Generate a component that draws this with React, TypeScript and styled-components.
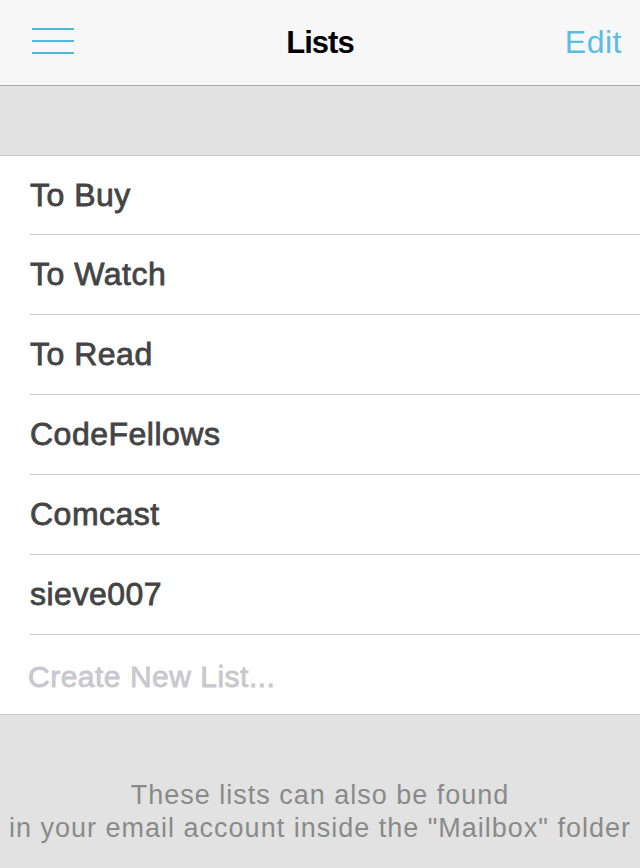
import React from "react";
import styled, { createGlobalStyle } from "styled-components";

const GlobalStyle = createGlobalStyle`
  html, body {
    margin: 0;
    padding: 0;
    background: #e2e2e2;
  }
  body {
    font-family: "Liberation Sans", Arial, sans-serif;
    -webkit-font-smoothing: antialiased;
  }
`;

const Screen = styled.div`
  width: 640px;
  height: 868px;
  display: flex;
  flex-direction: column;
  background: #e2e2e2;
  overflow: hidden;
`;

const NavBar = styled.header`
  height: 85px;
  flex-shrink: 0;
  display: grid;
  grid-template-columns: 1fr auto 1fr;
  align-items: center;
  padding: 0 18px;
  background: #f7f7f7;
  border-bottom: 1px solid #a8a8a8;
`;

const MenuButton = styled.button`
  justify-self: start;
  width: 42px;
  height: 26px;
  margin: -4px 0 0 14px;
  padding: 0;
  border: none;
  background: none;
  display: flex;
  flex-direction: column;
  justify-content: space-between;

  span {
    display: block;
    width: 42px;
    height: 2px;
    background: #4fb9e0;
  }
`;

const Title = styled.h1`
  margin: 0;
  font-size: 31px;
  font-weight: 700;
  color: #000;
  letter-spacing: -1px;
`;

const EditButton = styled.button`
  justify-self: end;
  border: none;
  background: none;
  padding: 0;
  font-family: inherit;
  font-size: 32px;
  font-weight: 400;
  letter-spacing: 0.5px;
  color: #5bbde2;
`;

const Band = styled.div`
  height: 69px;
  flex-shrink: 0;
  border-bottom: 1px solid #c8c8c8;
`;

const List = styled.ul`
  margin: 0;
  padding: 0 0 0 30px;
  list-style: none;
  background: #fff;
  border-bottom: 1px solid #c8c8c8;
`;

const Row = styled.li<{ $placeholder?: boolean }>`
  height: ${({ $placeholder }) => ($placeholder ? "79px" : "80px")};
  box-sizing: border-box;
  display: flex;
  align-items: center;
  border-bottom: ${({ $placeholder }) =>
    $placeholder ? "none" : "1px solid #cbcbcb"};
  font-size: ${({ $placeholder }) => ($placeholder ? "30px" : "32px")};
  font-weight: 400;
  letter-spacing: 0.5px;
  color: ${({ $placeholder }) => ($placeholder ? "#c8c8cd" : "#444444")};
  -webkit-text-stroke: 0.8px
    ${({ $placeholder }) => ($placeholder ? "#c8c8cd" : "#444444")};
  margin-left: ${({ $placeholder }) => ($placeholder ? "-2px" : "0")};
  padding-top: ${({ $placeholder }) => ($placeholder ? "4px" : "0")};

  &:first-child {
    height: 79px;
  }
`;

const Footer = styled.footer`
  flex: 1;
  padding-top: 64px;
  text-align: center;
  font-size: 27px;
  line-height: 33px;
  letter-spacing: 1px;
  color: #8a8a8a;
`;

const lists = ["To Buy", "To Watch", "To Read", "CodeFellows", "Comcast", "sieve007"];

export default function App() {
  return (
    <Screen>
      <GlobalStyle />
      <NavBar>
        <MenuButton aria-label="Menu">
          <span />
          <span />
          <span />
        </MenuButton>
        <Title>Lists</Title>
        <EditButton>Edit</EditButton>
      </NavBar>
      <Band />
      <List>
        {lists.map((name) => (
          <Row key={name}>{name}</Row>
        ))}
        <Row $placeholder>Create New List...</Row>
      </List>
      <Footer>
        These lists can also be found
        <br />
        in your email account inside the "Mailbox" folder
      </Footer>
    </Screen>
  );
}
